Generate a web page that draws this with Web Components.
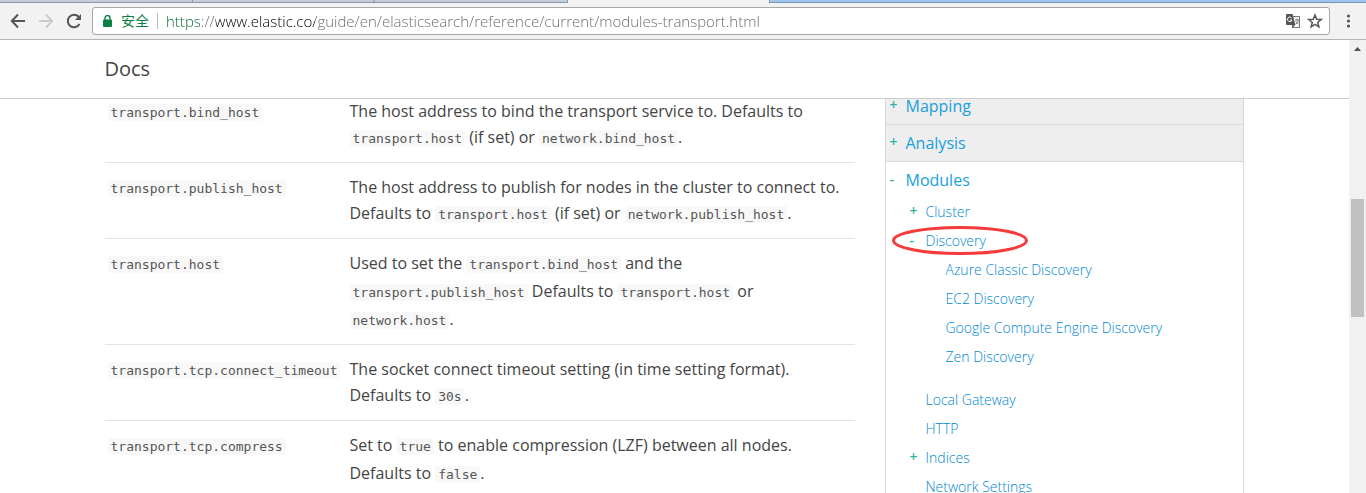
<!DOCTYPE html>
<html lang="en">
<head>
    <meta charset="UTF-8">
    <title>Transport</title>
    <style>
        body {
            margin: 0;
            height: 100vh;
            overflow: hidden;
            background: #fff;
        }
    </style>
</head>
<body>
<script>
    function define(name, html, setup) {
        const template = document.createElement('template');
        template.innerHTML = html;
        window.customElements.define(name, class extends HTMLElement {
            constructor() {
                super();
                this.attachShadow({mode: 'open'});
                this.shadowRoot.appendChild(template.content.cloneNode(true));
            }

            connectedCallback() {
                if (setup) setup(this, this.shadowRoot);
            }
        });
    }

    define('browser-window', `
<style>
    :host {
        display: flex;
        flex-direction: column;
        height: 100%;
        font-family: "Open Sans", "Noto Sans CJK SC", sans-serif;
        color: #444;
    }
</style>
<slot></slot>
    `);

    define('tab-strip', `
<style>
    :host {
        display: flex;
        flex: none;
        height: 3px;
        box-sizing: border-box;
        background: #9fc5ea;
        border-bottom: 1px solid #7496bb;
    }
    span {
        flex: none;
        box-sizing: border-box;
        width: 193px;
        height: 3px;
        background: #c3cdd8;
        border-right: 1px solid #8d99a8;
        border-bottom: 1px solid #8d99a8;
    }
    span:first-child {
        width: 205px;
        margin-left: 6px;
    }
    span:nth-child(3) {
        width: 182px;
        border-bottom-right-radius: 3px;
    }
    span.active {
        width: 202px;
        background: #f2f2f2;
        border-bottom: 0;
    }
</style>
<span></span><span></span><span></span><span class="active"></span>
    `);

    define('browser-toolbar', `
<style>
    :host {
        display: flex;
        flex: none;
        align-items: center;
        height: 37px;
        box-sizing: border-box;
        padding: 0 10px;
        background: #f2f2f2;
        border-bottom: 1px solid #b6b4b6;
    }
    button {
        display: flex;
        flex: none;
        padding: 0;
        border: 0;
        background: none;
    }
    .nav {
        width: 28px;
    }
    .nav:nth-of-type(3) {
        width: 26px;
    }
    .field {
        display: flex;
        flex: 1;
        align-items: center;
        box-sizing: border-box;
        height: 28px;
        padding: 0 6px 0 10px;
        margin-right: 10px;
        background: #fff;
        border: 1px solid #a6a6a6;
        border-radius: 3px;
    }
    label {
        padding: 0 8px 0 9px;
        margin-right: 8px;
        border-right: 1px solid #bbb;
        font-size: 14px;
        line-height: 16px;
        color: #0b8043;
    }
    /* the scheme, host and path colours are painted through the text */
    input {
        flex: 1;
        min-width: 0;
        padding: 0;
        border: 0;
        outline: 0;
        font: 300 15px/20px "Open Sans", sans-serif;
        color: transparent;
        background: linear-gradient(to right, #006b30 35px, #666 35px 50px, #000 50px 149px, #666 149px);
        -webkit-background-clip: text;
        background-clip: text;
    }
    .translate {
        margin-right: 6px;
    }
</style>
<button class="nav" aria-label="Back"><svg width="16" height="16" viewBox="0 0 16 16" fill="none" stroke="#555" stroke-width="2"><path d="M8 1.5 1.8 8 8 14.5M2 8h13"/></svg></button>
<button class="nav" aria-label="Forward"><svg width="16" height="16" viewBox="0 0 16 16" fill="none" stroke="#ccc" stroke-width="2"><path d="M8 1.5 14.2 8 8 14.5M14 8H1"/></svg></button>
<button class="nav" aria-label="Reload"><svg width="16" height="16" viewBox="0 0 16 16" fill="none" stroke="#555" stroke-width="2"><path d="M13.5 11A6.2 6.2 0 1 1 12.6 3.8"/><path d="M15 1v6H9z" fill="#555" stroke="none"/></svg></button>
<div class="field">
    <svg width="9" height="12" viewBox="0 0 9 12"><path d="M2 5V3a2.5 2.5 0 0 1 5 0v2" fill="none" stroke="#0b8043" stroke-width="1.4"/><rect y="4.5" width="9" height="7.5" rx="1" fill="#0b8043"/></svg>
    <label for="url">安全</label>
    <input id="url" type="text" spellcheck="false" value="https://www.elastic.co/guide/en/elasticsearch/reference/current/modules-transport.html">
    <button class="translate" aria-label="Translate this page"><svg width="16" height="16" viewBox="0 0 16 16"><rect x="7.5" y="3.5" width="7" height="11" fill="#fff" stroke="#777"/><path d="M2 1h5.500l3 11H2a1 1 0 0 1-1-1V2a1 1 0 0 1 1-1z" fill="#555"/><path d="M7 12h3l-2 2.500z" fill="#555"/><path d="M6.500 4.800A2.300 2.300 0 1 0 7 7H5" fill="none" stroke="#fff"/><path d="M10 7h4M12 5.500V7M13.500 7c-.3 1.500-1.200 3-2.500 4M11 8.500c.5 1 1.500 2 2.500 2.500" fill="none" stroke="#777"/></svg></button>
    <button aria-label="Bookmark this page"><svg width="16" height="16" viewBox="0 0 16 16" fill="none" stroke="#555" stroke-width="1.5"><path d="m8 2 1.700 4.200 4.500.3-3.500 2.900 1.200 4.400L8 11.400l-3.900 2.400 1.200-4.400L1.800 6.500l4.500-.3z"/></svg></button>
</div>
<button aria-label="Menu"><svg width="16" height="16" viewBox="0 0 16 16" fill="#555"><circle cx="8.500" cy="3" r="1.600"/><circle cx="8.500" cy="8" r="1.600"/><circle cx="8.500" cy="13" r="1.600"/></svg></button>
    `);

    define('page-view', `
<style>
    :host {
        display: flex;
        flex: 1;
        min-height: 0;
    }
    .page {
        display: flex;
        flex: 1;
        flex-direction: column;
        min-width: 0;
    }
    .clip {
        flex: 1;
        min-height: 0;
        overflow: hidden;
    }
    /* scrolled a little past the start of the table */
    .columns {
        display: grid;
        grid-template-columns: minmax(0, 750px) minmax(0, 359px);
        column-gap: 30px;
        max-width: 1140px;
        margin: -12px auto 0;
        align-items: start;
    }
</style>
<div class="page">
    <slot name="header"></slot>
    <div class="clip"><div class="columns"><slot></slot></div></div>
</div>
<slot name="scrollbar"></slot>
    `);

    define('page-scrollbar', `
<style>
    :host {
        display: flex;
        flex: none;
        flex-direction: column;
        align-items: center;
        width: 17px;
        background: #f1f1f1;
    }
    svg {
        flex: none;
        margin-top: 7px;
    }
    .before {
        flex: 148;
    }
    .thumb {
        flex: 118;
        width: 13px;
        background: #c1c1c1;
    }
    .after {
        flex: 176;
    }
</style>
<svg width="7" height="4" viewBox="0 0 7 4"><path d="M0 4 3.500 0 7 4z" fill="#505050"/></svg>
<div class="before"></div>
<div class="thumb"></div>
<div class="after"></div>
    `);

    define('docs-header', `
<style>
    :host {
        display: block;
        border-bottom: 1px solid #ccc;
    }
    h1 {
        max-width: 1140px;
        margin: 0 auto;
        font-size: 20px;
        font-weight: 400;
        line-height: 58px;
    }
</style>
<h1><slot></slot></h1>
    `);

    const settings = [
        ['transport.bind_host', 'The host address to bind the transport service to. Defaults to `transport.host` (if set) or `network.bind_host`.'],
        ['transport.publish_host', 'The host address to publish for nodes in the cluster to connect to. Defaults to `transport.host` (if set) or `network.publish_host`.'],
        ['transport.host', 'Used to set the `transport.bind_host` and the `transport.publish_host` Defaults to `transport.host` or `network.host`.'],
        ['transport.tcp.connect_timeout', 'The socket connect timeout setting (in time setting format). Defaults to `30s`.'],
        ['transport.tcp.compress', 'Set to `true` to enable compression (LZF) between all nodes. Defaults to `false`.']
    ];

    define('settings-table', `
<style>
    :host {
        display: block;
    }
    table {
        width: 100%;
        border-collapse: separate;
        border-spacing: 0;
        font-size: 16px;
        line-height: 26px;
    }
    th, td {
        padding: 11px 5px 10px 0;
        border-bottom: 1px solid #e4e4e4;
        font-weight: 400;
        text-align: left;
        vertical-align: top;
    }
    th {
        width: 237px;
        padding-left: 3px;
        white-space: nowrap;
    }
    code {
        display: inline-block;
        padding: 0 3px;
        margin-bottom: 5px;
        border-radius: 3px;
        background: #f8f8f8;
        font-family: "DejaVu Sans Mono", monospace;
        font-size: 13px;
        line-height: 17px;
        color: #555;
    }
</style>
<table><tbody></tbody></table>
    `, (el, root) => {
        root.querySelector('tbody').innerHTML = settings.map(([name, text]) => `
            <tr>
                <th scope="row"><code>${name}</code></th>
                <td>${text.replace(/`([^`]+)`/g, '<code>$1</code>')}</td>
            </tr>`).join('');
    });

    define('nav-tree', `
<style>
    :host {
        display: block;
        padding-top: 1px;
        border: 1px solid #d9d9d9;
        border-width: 0 1px;
        background: #fff;
    }
</style>
<nav><slot></slot></nav>
    `);

    define('nav-section', `
<style>
    :host {
        display: block;
    }
    .head {
        display: flex;
        height: 37px;
        box-sizing: border-box;
        border-bottom: 1px solid #d9d9d9;
        background: #eee;
        font-size: 16px;
        line-height: 36px;
    }
    :host([open]) .head {
        height: 35px;
        border: 0;
        background: none;
    }
    .mark {
        width: 16px;
        padding-left: 4px;
        font-size: 14px;
        font-weight: 600;
        line-height: 33px;
        color: #2bb5a4;
    }
    a {
        color: #1a9fe0;
        text-decoration: none;
    }
</style>
<div class="head"><span class="mark"></span><a href="#"></a></div>
<slot></slot>
    `, (el, root) => {
        root.querySelector('.mark').textContent = el.hasAttribute('open') ? '-' : '+';
        root.querySelector('a').textContent = el.getAttribute('label');
    });

    define('nav-item', `
<style>
    :host {
        display: block;
        padding-left: 20px;
        font-size: 14px;
        line-height: 29px;
    }
    :host([open]) {
        padding-bottom: 14px;
    }
    .row {
        display: flex;
    }
    .mark {
        width: 16px;
        padding-left: 4px;
        font-weight: 600;
        line-height: 28px;
        color: #2bb5a4;
    }
    .link {
        position: relative;
    }
    a {
        font-weight: 300;
        color: #0088d4;
        text-decoration: none;
    }
    svg {
        display: none;
        position: absolute;
        left: -34px;
        top: 0;
        pointer-events: none;
    }
    :host([circled]) svg {
        display: block;
    }
</style>
<div class="row"><span class="mark"></span><span class="link"><a href="#"></a><svg width="136" height="29" viewBox="0 0 136 29"><ellipse cx="68" cy="14.500" rx="66.500" ry="13" fill="none" stroke="#f83a3a" stroke-width="3"/></svg></span></div>
<slot></slot>
    `, (el, root) => {
        const mark = el.getAttribute('mark');
        if (mark) root.querySelector('.mark').textContent = mark;
        root.querySelector('a').textContent = el.getAttribute('label');
    });
</script>
<browser-window>
    <tab-strip></tab-strip>
    <browser-toolbar></browser-toolbar>
    <page-view>
        <docs-header slot="header">Docs</docs-header>
        <settings-table></settings-table>
        <nav-tree>
            <nav-section label="Mapping"></nav-section>
            <nav-section label="Analysis"></nav-section>
            <nav-section label="Modules" open>
                <nav-item label="Cluster" mark="+"></nav-item>
                <nav-item label="Discovery" mark="-" open circled>
                    <nav-item label="Azure Classic Discovery"></nav-item>
                    <nav-item label="EC2 Discovery"></nav-item>
                    <nav-item label="Google Compute Engine Discovery"></nav-item>
                    <nav-item label="Zen Discovery"></nav-item>
                </nav-item>
                <nav-item label="Local Gateway"></nav-item>
                <nav-item label="HTTP"></nav-item>
                <nav-item label="Indices" mark="+"></nav-item>
                <nav-item label="Network Settings"></nav-item>
            </nav-section>
        </nav-tree>
        <page-scrollbar slot="scrollbar"></page-scrollbar>
    </page-view>
</browser-window>
</body>
</html>
